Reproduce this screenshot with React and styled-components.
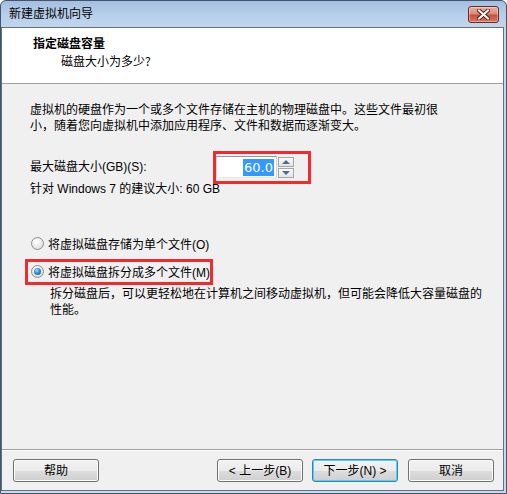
import React from "react";
import styled, { createGlobalStyle } from "styled-components";

const Global = createGlobalStyle`
  html, body { margin: 0; padding: 0; background: #fff; }
  body { font-family: "Liberation Sans", "Noto Sans CJK SC", sans-serif; font-size: 12px; color: #000; }
  * { box-sizing: border-box; }
`;

const Window = styled.div`
  width: 507px;
  height: 494px;
  display: flex;
  flex-direction: column;
  border: 1px solid #44546b;
  border-radius: 6px 6px 0 0;
  background: linear-gradient(#a3bfe0 0px, #b8cfe9 14px, #c4d8ee 30px, #c6d9ee 100%);
  padding: 0 2px 2px 0;
`;

const TitleBar = styled.div`
  height: 26px;
  flex: none;
  display: flex;
  align-items: center;
  justify-content: space-between;
  padding: 0 5px 2px 8px;
`;

const TitleText = styled.span`
  font-family: "Noto Sans CJK SC", sans-serif;
  font-size: 12px;
  line-height: 16px;
  color: #000;
`;

const CloseButton = styled.div`
  width: 31px;
  height: 17px;
  margin-top: 2px;
  border: 1px solid #6d2a20;
  border-radius: 3px;
  background: linear-gradient(#eab0a3 0%, #dc8b78 45%, #c8503a 55%, #d67a62 100%);
  display: flex;
  align-items: center;
  justify-content: center;
  box-shadow: inset 0 0 0 1px rgba(255, 255, 255, 0.35);
`;

const Client = styled.div`
  flex: 1;
  display: flex;
  flex-direction: column;
  border: 1px solid #5f7088;
  background: #f0f0f0;
`;

const Header = styled.div`
  height: 56px;
  flex: none;
  background: #fff;
  border-bottom: 1px solid #a0a0a0;
  padding: 7px 0 0 31px;
`;

const HeaderTitle = styled.div`
  font-family: "Noto Sans CJK SC", sans-serif;
  font-weight: 700;
  font-size: 12px;
  line-height: 16px;
`;

const HeaderSub = styled.div`
  font-family: "Noto Sans CJK SC", sans-serif;
  font-size: 12px;
  line-height: 16px;
  margin: 2px 0 0 28px;
`;

const Body = styled.div`
  flex: 1;
  padding: 18px 0 0 28px;
`;

const Para = styled.p`
  margin: 0;
  line-height: 16px;
  white-space: nowrap;
`;

const SizeRow = styled.div`
  display: flex;
  align-items: center;
  height: 22px;
  margin-top: 22px;
`;

const SizeLabel = styled.span`
  width: 186px;
  line-height: 16px;
`;

const Spin = styled.div`
  position: relative;
  display: flex;
  gap: 1px;
  &::after {
    content: "";
    position: absolute;
    left: -3px;
    top: -5px;
    right: -17px;
    bottom: -6px;
    border: 3px solid #ef2b2d;
    pointer-events: none;
  }
`;

const Field = styled.div`
  width: 61px;
  height: 22px;
  border: 1px solid #abadb3;
  border-top-color: #8f96a5;
  border-left-color: #d3d8e0;
  border-right-color: #d3d8e0;
  border-bottom-color: #e3e9ef;
  background: #fff;
  display: flex;
  align-items: center;
  justify-content: flex-end;
  padding-right: 2px;
`;

const Selected = styled.span`
  background: #3399ff;
  color: #fff;
  font-family: "DejaVu Sans", sans-serif;
  font-size: 13px;
  line-height: 17px;
  padding: 0 1px;
`;

const SpinButtons = styled.div`
  display: flex;
  flex-direction: column;
  gap: 1px;
  margin-top: 1px;
`;

const SpinBtn = styled.div`
  width: 16px;
  height: 10px;
  border: 1px solid #a7a7a7;
  background: linear-gradient(#fbfbfb, #e4e4e4);
  display: flex;
  align-items: center;
  justify-content: center;
`;

const Arrow = styled.div`
  width: 0;
  height: 0;
  border-left: 4px solid transparent;
  border-right: 4px solid transparent;
  ${(p) => (p.$up ? "border-bottom: 4px solid #4e6a9a;" : "border-top: 4px solid #4e6a9a;")}
`;

const Rec = styled.div`
  margin-top: 3px;
  line-height: 16px;
`;

const RadioRow = styled.label`
  position: relative;
  display: flex;
  align-items: center;
  gap: 4px;
  height: 16px;
  margin-top: ${(p) => p.$mt}px;
  margin-left: 1px;
  width: fit-content;
  ${(p) =>
    p.$marked &&
    `
    &::after {
      content: "";
      position: absolute;
      left: -6px;
      top: -4px;
      right: -3px;
      bottom: -6px;
      border: 3px solid #ef2b2d;
      pointer-events: none;
    }
  `}
`;

const RadioDot = styled.span`
  width: 13px;
  height: 13px;
  border-radius: 50%;
  border: 1px solid #8d8d8d;
  background: radial-gradient(circle at 40% 35%, #ffffff 0%, #e6e6e6 60%, #cfcfcf 100%);
  display: flex;
  align-items: center;
  justify-content: center;
  &::after {
    content: "";
    display: ${(p) => (p.$checked ? "block" : "none")};
    width: 7px;
    height: 7px;
    border-radius: 50%;
    background: radial-gradient(circle at 40% 35%, #a6e3ff 0%, #2a8fd6 45%, #0c4f8f 100%);
  }
`;

const Desc = styled.p`
  margin: 7px 0 0 20px;
  line-height: 16px;
  white-space: nowrap;
`;

const Footer = styled.div`
  flex: none;
  height: 41px;
  border-top: 1px solid #a0a0a0;
  box-shadow: inset 0 1px 0 #fff;
  display: flex;
  align-items: flex-start;
  padding: 9px 9px 0 11px;
`;

const Spacer = styled.div`
  flex: 1;
`;

const Button = styled.button`
  width: 86px;
  height: 23px;
  margin-left: ${(p) => p.$ml || 0}px;
  border: 1px solid ${(p) => (p.$focus ? "#3c7fb1" : "#707070")};
  border-radius: 3px;
  background: linear-gradient(#f2f2f2 0%, #ebebeb 50%, #dddddd 51%, #cfcfcf 100%);
  box-shadow: inset 0 0 0 1px ${(p) => (p.$focus ? "#48d7fb" : "#fcfcfc")};
  font-family: "Liberation Sans", "Noto Sans CJK SC", sans-serif;
  font-size: 12px;
  color: #000;
  padding: 0;
  line-height: 16px;
`;

export default function App() {
  return (
    <>
      <Global />
      <Window>
        <TitleBar>
          <TitleText>新建虚拟机向导</TitleText>
          <CloseButton>
            <svg width="13" height="11" viewBox="0 0 13 11">
              <path
                d="M2 1.5 L11 9.5 M11 1.5 L2 9.5"
                stroke="#5a2118"
                strokeWidth="4"
                strokeLinecap="square"
              />
              <path
                d="M2 1.5 L11 9.5 M11 1.5 L2 9.5"
                stroke="#ffffff"
                strokeWidth="2"
                strokeLinecap="square"
              />
            </svg>
          </CloseButton>
        </TitleBar>
        <Client>
          <Header>
            <HeaderTitle>指定磁盘容量</HeaderTitle>
            <HeaderSub>磁盘大小为多少?</HeaderSub>
          </Header>
          <Body>
            <Para>
              虚拟机的硬盘作为一个或多个文件存储在主机的物理磁盘中。这些文件最初很
              <br />
              小，随着您向虚拟机中添加应用程序、文件和数据而逐渐变大。
            </Para>
            <SizeRow>
              <SizeLabel>最大磁盘大小(GB)(S):</SizeLabel>
              <Spin>
                <Field>
                  <Selected>60.0</Selected>
                </Field>
                <SpinButtons>
                  <SpinBtn>
                    <Arrow $up />
                  </SpinBtn>
                  <SpinBtn>
                    <Arrow />
                  </SpinBtn>
                </SpinButtons>
              </Spin>
            </SizeRow>
            <Rec>针对 Windows 7 的建议大小: 60 GB</Rec>
            <RadioRow $mt={38}>
              <RadioDot />
              <span>将虚拟磁盘存储为单个文件(O)</span>
            </RadioRow>
            <RadioRow $mt={12} $marked>
              <RadioDot $checked />
              <span>将虚拟磁盘拆分成多个文件(M)</span>
            </RadioRow>
            <Desc>
              拆分磁盘后，可以更轻松地在计算机之间移动虚拟机，但可能会降低大容量磁盘的
              <br />
              性能。
            </Desc>
          </Body>
          <Footer>
            <Button>帮助</Button>
            <Spacer />
            <Button>&lt; 上一步(B)</Button>
            <Button $ml={9} $focus>
              下一步(N) &gt;
            </Button>
            <Button $ml={10}>取消</Button>
          </Footer>
        </Client>
      </Window>
    </>
  );
}
